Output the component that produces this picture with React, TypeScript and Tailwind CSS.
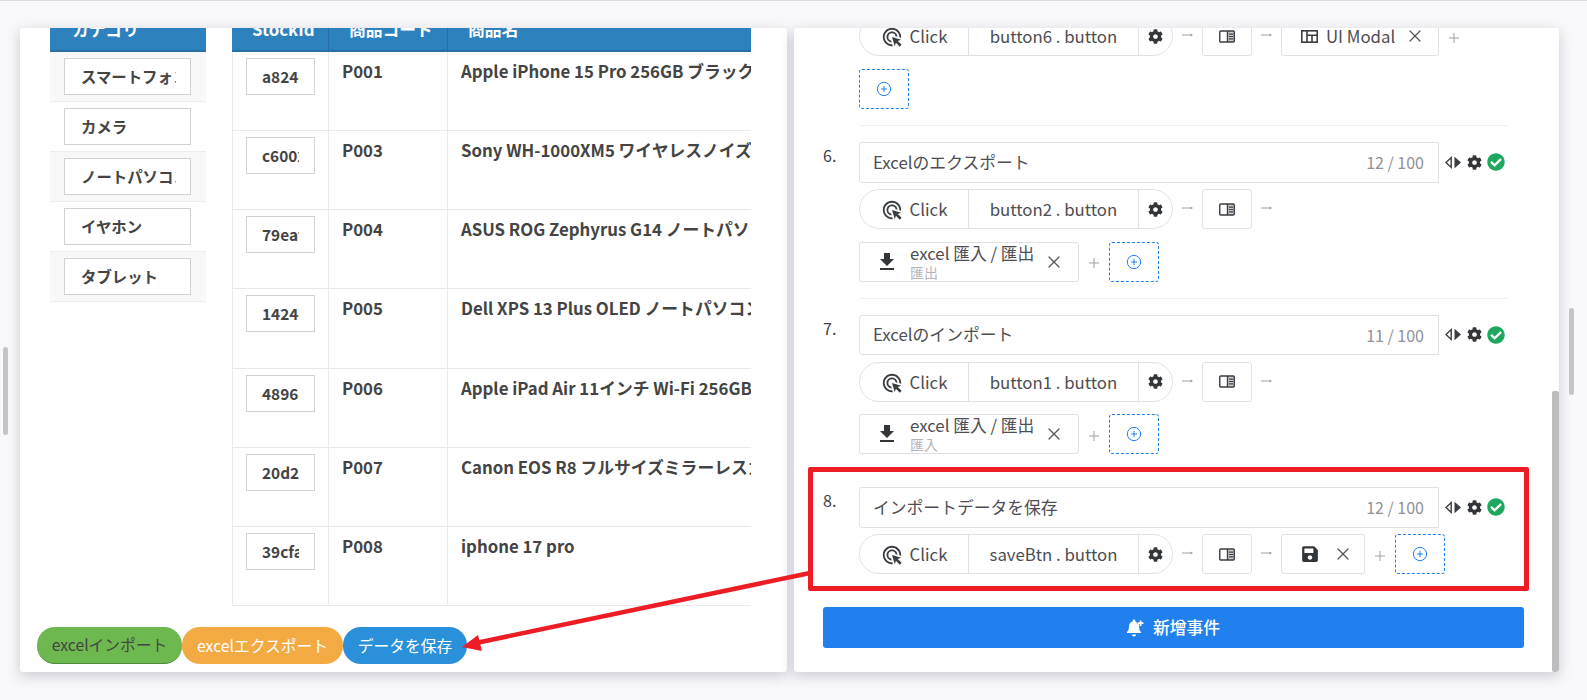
import React from 'react'
import { MdAdsClick, MdDownload } from 'react-icons/md'
import { FaCog, FaSave, FaCheckCircle } from 'react-icons/fa'
import { CirclePlus, X, Plus } from 'lucide-react'

const categories = ['スマートフォン', 'カメラ', 'ノートパソコン', 'イヤホン', 'タブレット']

const products = [
  { id: 'a824e1', code: 'P001', name: 'Apple iPhone 15 Pro 256GB ブラックチタニウム' },
  { id: 'c6002b', code: 'P003', name: 'Sony WH-1000XM5 ワイヤレスノイズキャンセリング' },
  { id: '79eaf0', code: 'P004', name: 'ASUS ROG Zephyrus G14 ノートパソコン' },
  { id: '1424c8', code: 'P005', name: 'Dell XPS 13 Plus OLED ノートパソコン' },
  { id: '4896a3', code: 'P006', name: 'Apple iPad Air 11インチ Wi-Fi 256GB スペースグレイ' },
  { id: '20d2f7', code: 'P007', name: 'Canon EOS R8 フルサイズミラーレスカメラ' },
  { id: '39cfa1', code: 'P008', name: 'iphone 17 pro' },
]

const Arrow = () => (
  <svg width="11" height="8" viewBox="0 0 11 8" className="-mt-[2px] shrink-0 text-[#a0a0a0]" fill="none">
    <path d="M0 4h10" stroke="currentColor" strokeWidth="1" />
    <path d="M8.5 2.5 11 4 8.5 5.5z" fill="currentColor" />
  </svg>
)

const PanelIcon = () => (
  <svg width="16" height="13" viewBox="0 0 16 13" fill="none" className="text-[#3a3d42]">
    <rect x="0.75" y="1" width="14.5" height="11" rx="1" stroke="currentColor" strokeWidth="1.4" />
    <rect x="8.5" y="1" width="6.75" height="11" fill="currentColor" opacity="0.25" />
    <path d="M8.5 1v11" stroke="currentColor" strokeWidth="1.4" />
    <path d="M10 4.2h4M10 6.5h4M10 8.8h4" stroke="currentColor" strokeWidth="1.2" />
  </svg>
)

const ModalIcon = () => (
  <svg width="17" height="13" viewBox="0 0 17 13" fill="none" className="text-[#3a3d42]">
    <rect x="0.8" y="0.8" width="15.4" height="11.4" stroke="currentColor" strokeWidth="1.6" />
    <path d="M6 1v11M6 5.2h10M11 5.2v7" stroke="currentColor" strokeWidth="1.6" />
  </svg>
)

const CodeIcon = () => (
  <svg width="16" height="13" viewBox="0 0 16 13" className="text-[#3a3d42]">
    <path d="M6.2 1.6v9.8L1 6.5z" fill="none" stroke="currentColor" strokeWidth="1.4" />
    <path d="M9.5 0.8 16 6.5 9.5 12.2z" fill="currentColor" />
  </svg>
)

const BellPlusIcon = () => (
  <svg width="18" height="18" viewBox="0 0 18 18" fill="white">
    <path d="M7 0.5c.8 0 1.3.6 1.3 1.3v.6c.5.1 1 .3 1.4.6v1.5h1.8c.4.7.6 1.5.6 2.4 0 4 1 5 2 6.2.3.4 0 1-.5 1H.4c-.5 0-.8-.6-.5-1C1 11.500 2 10.900 2 6.900c0-2.300 1.500-4 3.700-4.500v-.6C5.700 1.100 6.200.5 7 .5z" />
    <path d="M5 15.500h4a2 2 0 0 1-4 0z" />
    <path d="M13.600 1.500v5.500M10.800 4.200h5.600" stroke="white" strokeWidth="1.700" />
  </svg>
)

const AddBox = () => (
  <div className="flex h-[40px] w-[50px] shrink-0 items-center justify-center rounded-[3px] border border-dashed border-[#2080ee]">
    <CirclePlus size={16} strokeWidth={1.5} className="text-[#2080ee]" />
  </div>
)

const TriggerPill = ({ target }: { target: string }) => (
  <div className="flex h-[40px] w-[314px] shrink-0 items-center rounded-[20px] border border-[#e0e0e6] text-[16.8px] text-[#4d4d52]">
    <div className="flex h-full w-[109px] items-center justify-center gap-[7px] border-r border-[#e0e0e6] pt-[2px]">
      <MdAdsClick size={22} className="text-[#3a3d42]" />
      <span>Click</span>
    </div>
    <div className="flex h-full w-[170px] items-center justify-center border-r border-[#e0e0e6] pt-[2px]">{target}</div>
    <div className="flex flex-1 items-center justify-center">
      <FaCog size={15} className="text-[#333639]" />
    </div>
  </div>
)

const PanelBox = () => (
  <div className="flex h-[40px] w-[50px] shrink-0 items-center justify-center rounded-[3px] border border-[#e0e0e6]">
    <PanelIcon />
  </div>
)

const ExcelAction = ({ sub }: { sub: string }) => (
  <div className="flex h-[40px] w-[219.5px] shrink-0 items-center rounded-[3px] border border-[#e0e0e6] pl-[15px] pr-[14px]">
    <MdDownload size={24} className="shrink-0 text-[#333639]" />
    <div className="ml-[11px] -mt-[1px] flex flex-col">
      <span className="whitespace-nowrap text-[16.8px] leading-[20px] text-[#4d4d52]">excel 匯入 / 匯出</span>
      <span className="mt-[1px] text-[14px] leading-[16px] text-[#b4b4b8]">{sub}</span>
    </div>
    <X size={20} strokeWidth={1.5} className="ml-auto text-[#555]" />
  </div>
)

const PlusMark = () => <Plus size={16} strokeWidth={1.5} className="-mx-[2px] mt-[3px] shrink-0 text-[#a0a0a0]" />

const EventTitle = ({ no, title, count }: { no: number; title: string; count: number }) => (
  <div className="flex">
    <div className="w-[36px] shrink-0 pt-[3px] text-[16px] leading-[20px] text-[#3f3f44]">{no}.</div>
    <div className="flex h-[40.5px] w-[580px] items-center justify-between rounded-l-[3px] border border-[#e0e0e6] pl-[13px] pr-[14px]">
      <span className="text-[16.8px] text-[#4d4d52]">{title}</span>
      <span className="text-[16px] text-[#909096]">{count} / 100</span>
    </div>
    <div className="ml-[6px] flex items-center">
      <CodeIcon />
      <FaCog size={15} className="ml-[6px] text-[#333639]" />
      <FaCheckCircle size={18} className="ml-[5px] text-[#1ea85d]" />
    </div>
  </div>
)

const Divider = () => <div className="ml-[36px] h-px w-[648px] bg-[#eeeef1]" />

export default function App() {
  return (
    <div className="relative h-[700px] w-[1587px] overflow-hidden bg-[#f9f9fb] font-['Noto_Sans_CJK_JP','Noto_Sans',sans-serif]">
      <div className="h-px w-full bg-[#dcdce0]" />
      <div className="flex gap-[7px] pl-[20px] pt-[27px]">
        {/* left card */}
        <div className="relative h-[644px] w-[767px] overflow-hidden rounded-[3px] bg-white shadow-[0_4px_14px_rgba(60,60,90,0.25)]">
          <div className="flex gap-[26px] pl-[30px]">
            <div className="w-[156px]">
              <div className="-mt-[16px] flex h-[40px] items-center border-b-2 border-[#266ea3] bg-[#2d81bd] pb-[2px] pl-[22px] text-[16.8px] font-bold text-white">
                カテゴリ
              </div>
              {categories.map((c, i) => (
                <div key={c} className={`flex h-[50px] items-center border-b border-[#eeeeee] px-[14px] ${i % 2 === 0 ? 'bg-[#f8f8f8]' : 'bg-white'}`}>
                  <input
                    readOnly
                    value={c}
                    className="h-[37px] w-[127px] border border-[#d2d2d2] bg-white pb-[1px] pl-[16px] pr-[14px] text-[15.4px] font-bold text-[#444]"
                  />
                </div>
              ))}
            </div>
            <div className="w-[519px] overflow-hidden">
              <table className="-mt-[16px] w-[800px] table-fixed border-separate border-spacing-0">
                <thead>
                  <tr className="text-left text-[16.8px] font-bold text-white">
                    <th className="h-[40px] w-[96px] border-b-2 border-[#266ea3] bg-[#2d81bd] pb-[2px] pl-[20px] font-bold">StockId</th>
                    <th className="h-[40px] w-[119px] border-b-2 border-l border-[#266ea3] bg-[#2d81bd] pb-[2px] pl-[20px] font-bold">商品コード</th>
                    <th className="h-[40px] border-b-2 border-l border-[#266ea3] bg-[#2d81bd] pb-[2px] pl-[20px] font-bold">商品名</th>
                  </tr>
                </thead>
                <tbody>
                  {products.map((p) => (
                    <tr key={p.code} className="h-[79.17px] align-top text-[16.8px] font-bold text-[#444]">
                      <td className="border-b border-l border-[#e9e9e9] px-[13px] pt-[6px]">
                        <input
                          readOnly
                          value={p.id}
                          className="h-[37px] w-[69px] border border-[#d2d2d2] bg-white px-[15px] pb-[1px] text-[15.4px] font-bold text-[#444]"
                        />
                      </td>
                      <td className="border-b border-l border-[#e9e9e9] pl-[13px] pt-[7px] leading-[24px]">{p.code}</td>
                      <td className="whitespace-nowrap border-b border-l border-[#e9e9e9] pl-[13px] pt-[7px] leading-[24px]">{p.name}</td>
                    </tr>
                  ))}
                </tbody>
              </table>
            </div>
          </div>
          <div className="absolute bottom-[8px] left-[17px] flex text-[15.75px] leading-none">
            <div className="flex h-[37px] w-[145px] items-center justify-center rounded-[18px] border-b border-[#4f8a3c] bg-[#6eb850] text-[#444]">excelインポート</div>
            <div className="flex h-[37px] w-[161px] items-center justify-center rounded-[18px] bg-[#f4aa42] text-white">excelエクスポート</div>
            <div className="flex h-[37px] w-[124px] items-center justify-center rounded-[18px] bg-[#2a90d9] text-white">データを保存</div>
          </div>
        </div>

        {/* right card */}
        <div className="relative h-[644px] w-[765px] overflow-hidden rounded-[3px] bg-white pl-[29px] shadow-[0_4px_14px_rgba(60,60,90,0.25)]">
          <div className="-mt-[12px] flex flex-col">
            <div className="ml-[36px] flex w-[640px] flex-wrap items-center gap-x-[9px] gap-y-[13px]">
              <TriggerPill target="button6 . button" />
              <Arrow />
              <PanelBox />
              <Arrow />
              <div className="flex h-[40px] w-[158px] items-center rounded-[3px] border border-[#e0e0e6] pl-[19px] text-[16.8px] text-[#4d4d52]">
                <ModalIcon />
                <span className="ml-[8px] pt-[2px]">UI Modal</span>
                <X size={20} strokeWidth={1.5} className="ml-[10px] text-[#555]" />
              </div>
              <PlusMark />
              <AddBox />
            </div>
            <div className="mt-[16px]"><Divider /></div>

            <div className="mt-[16px]">
              <EventTitle no={6} title="Excelのエクスポート" count={12} />
              <div className="ml-[36px] mt-[6.5px] flex w-[640px] flex-wrap items-center gap-x-[9px] gap-y-[12.5px]">
                <TriggerPill target="button2 . button" />
                <Arrow />
                <PanelBox />
                <Arrow />
                <ExcelAction sub="匯出" />
                <PlusMark />
                <AddBox />
              </div>
            </div>
            <div className="mt-[16.5px]"><Divider /></div>

            <div className="mt-[15.5px]">
              <EventTitle no={7} title="Excelのインポート" count={11} />
              <div className="ml-[36px] mt-[6.5px] flex w-[640px] flex-wrap items-center gap-x-[9px] gap-y-[12.5px]">
                <TriggerPill target="button1 . button" />
                <Arrow />
                <PanelBox />
                <Arrow />
                <ExcelAction sub="匯入" />
                <PlusMark />
                <AddBox />
              </div>
            </div>
            <div className="mt-[16.5px]"><Divider /></div>

            <div className="mt-[15.5px]">
              <EventTitle no={8} title="インポートデータを保存" count={12} />
              <div className="ml-[36px] mt-[6.5px] flex w-[640px] items-center gap-x-[9px]">
                <TriggerPill target="saveBtn . button" />
                <Arrow />
                <PanelBox />
                <Arrow />
                <div className="flex h-[40px] w-[84px] shrink-0 items-center rounded-[3px] border border-[#e0e0e6] pl-[19px]">
                  <FaSave size={18} className="text-[#333639]" />
                  <X size={20} strokeWidth={1.5} className="ml-[14px] text-[#555]" />
                </div>
                <PlusMark />
                <AddBox />
              </div>
            </div>

            <button className="mt-[33px] flex h-[41px] w-[701px] items-center justify-center gap-[8px] rounded-[3px] bg-[#2080ee] text-[16.8px] font-medium text-white">
              <BellPlusIcon />
              新增事件
            </button>
          </div>
          {/* inner scrollbar */}
          <div className="absolute right-0 top-[363px] h-[281px] w-[7px] rounded-[2px] bg-[#bdbdbd]" />
        </div>
      </div>

      {/* page scrollbars */}
      <div className="absolute left-[3px] top-[347px] h-[88px] w-[5px] rounded-[3px] bg-[#c4c4c8]" />
      <div className="absolute left-[1569px] top-[308px] h-[87px] w-[5px] rounded-[3px] bg-[#c4c4c8]" />

      {/* annotation */}
      <div className="pointer-events-none absolute left-[808px] top-[467px] h-[124px] w-[721px] rounded-[2px] border-[5px] border-[#ee1c25]" />
      <svg className="pointer-events-none absolute left-0 top-0" width="1587" height="700" fill="none">
        <path d="M810 573 476 643" stroke="#ee1c25" strokeWidth="4.5" />
        <path d="M462 647 478 635 482 651z" fill="#ee1c25" />
      </svg>
    </div>
  )
}
